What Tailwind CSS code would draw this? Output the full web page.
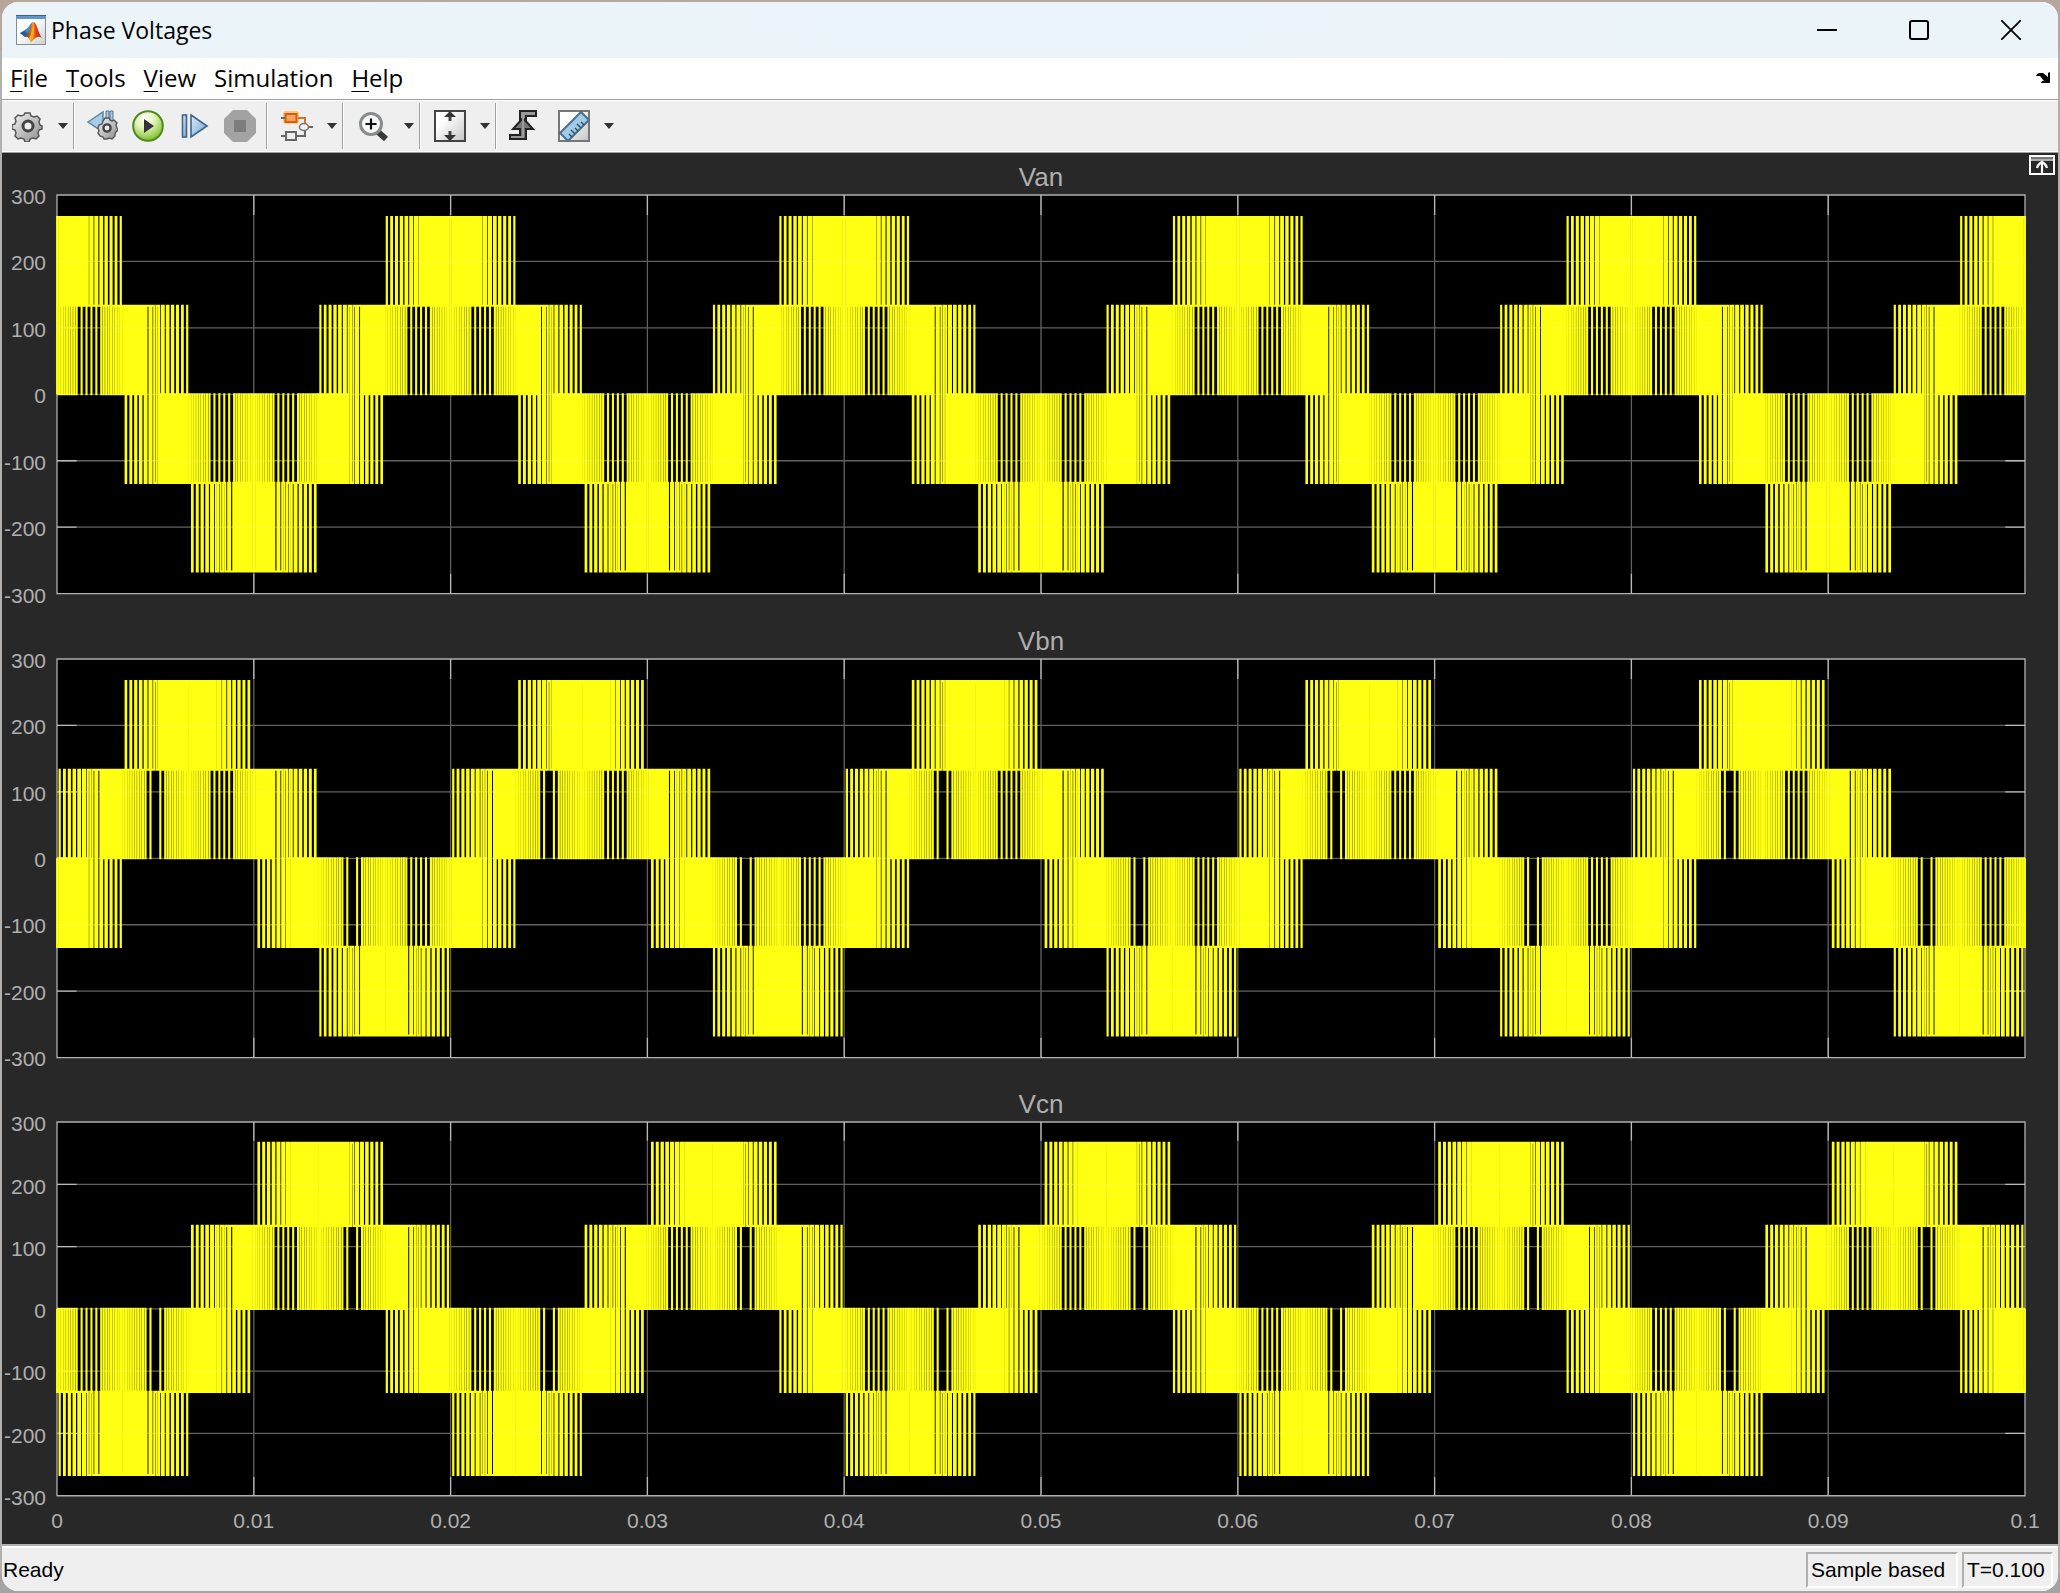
<!DOCTYPE html>
<html lang="en">
<head>
    <meta charset="UTF-8">
    <meta name="viewport" content="width=device-width, initial-scale=1.0">
    <title>Phase Voltages</title>
    <script src="https://cdn.jsdelivr.net/npm/@tailwindcss/browser@4"></script>
</head>
<body class="h-screen p-[2px] bg-[#b2b0af] bg-[linear-gradient(#b8a59b_50px,#b2b0af_51px,#b2b0af_calc(100%-20px),#a3a3a3_calc(100%-19px))] font-['Liberation_Sans',sans-serif] text-black">
    <div class="h-full flex flex-col rounded-2xl overflow-hidden bg-[#efefef]">
        <header class="h-14 shrink-0 flex items-center bg-linear-to-r from-[#ebf5f8] via-[#ecf4fb] to-[#ebf4f8] pl-[14px] font-['Open_Sans',sans-serif]">
            <svg class="w-[30px] h-[30px] mr-[5px]" viewBox="0 0 30 30">
                <defs>
                    <linearGradient id="mlPaper" x1="0" y1="0" x2="1" y2="1"><stop offset="0.4" stop-color="#fff"/><stop offset="1" stop-color="#cfcfcf"/></linearGradient>
                    <linearGradient id="mlPeak" x1="0" x2="1"><stop offset="0" stop-color="#7a1f10"/><stop offset="0.45" stop-color="#f08a1c"/><stop offset="0.6" stop-color="#e2501a"/><stop offset="1" stop-color="#9c1f12"/></linearGradient>
                </defs>
                <rect x="0.5" y="0.5" width="29" height="29" fill="url(#mlPaper)" stroke="#858b92"/>
                <rect x="0" y="0" width="30" height="4" fill="#5f96cb"/>
                <path d="M0 .5h30" stroke="#3c5f8c"/>
                <path d="M4 18L10 14C13 13 14 8 17 7L13 20L9 22Z" fill="#3f8fcb"/>
                <path d="M4 18L9 22L12 19L9 16Z" fill="#2a5f95"/>
                <path d="M9 22C13 20 14 9 18 7C21 8 22 18 26 23C22 20 19 23 15 27C13 23 12 21 9 22Z" fill="url(#mlPeak)"/>
                <path d="M13 23C16 19 16 11 18 7C18 15 19 20 15 27Z" fill="#f7a823"/>
            </svg>
            <h1 class="text-[23px] leading-8">Phase Voltages</h1>
            <div class="ml-auto flex mr-[2px]">
                <button aria-label="Minimize" class="w-[92px] h-14 grid place-items-center">
                    <svg class="w-5 h-5" viewBox="0 0 20 20"><path d="M0 10h20" stroke="#000" stroke-width="2"/></svg>
                </button>
                <button aria-label="Maximize" class="w-[92px] h-14 grid place-items-center">
                    <svg class="w-5 h-5" viewBox="0 0 20 20"><rect x="1" y="1" width="18" height="18" rx="2" fill="none" stroke="#000" stroke-width="2"/></svg>
                </button>
                <button aria-label="Close" class="w-[91px] h-14 grid place-items-center">
                    <svg class="w-5 h-5" viewBox="0 0 20 20"><path d="M0 0L20 20M20 0L0 20" stroke="#000" stroke-width="1.8"/></svg>
                </button>
            </div>
        </header>

        <nav class="h-[41px] shrink-0 flex items-center gap-[18px] bg-white pl-[8px] pr-[7px] pb-[2px] font-['Open_Sans',sans-serif] text-[24px] leading-8">
            <button><span class="underline underline-offset-4 decoration-1">F</span>ile</button>
            <button><span class="underline underline-offset-4 decoration-1">T</span>ools</button>
            <button><span class="underline underline-offset-4 decoration-1">V</span>iew</button>
            <button>S<span class="underline underline-offset-4 decoration-1">i</span>mulation</button>
            <button><span class="underline underline-offset-4 decoration-1">H</span>elp</button>
            <button aria-label="Dock" class="ml-auto">
                <svg class="w-[15px] h-[12px]" viewBox="0 0 15 12"><path d="M0 4Q1 1 4 1H7L12 5V1L14 0V11H5L6 9H8L4 4Z" fill="#000"/></svg>
            </button>
        </nav>

        <div class="h-[54px] shrink-0 flex items-center bg-[#efefef] border-t border-b border-[#a0a0a0] shadow-[inset_0_1px_#fff,inset_0_-1px_#fff]">
            <div class="h-[46px] flex items-center pl-[10px] gap-[9px] border-r border-[#a0a0a0] shadow-[1px_0_#fff]">
                <button aria-label="Configuration properties" class="w-8 h-8">
                    <svg viewBox="0 0 32 32">
                        <defs><linearGradient id="steel" x1="0" y1="0" x2="1" y2="1"><stop offset="0" stop-color="#f4f4f4"/><stop offset="1" stop-color="#8c8c8c"/></linearGradient></defs>
                        <path d="M13 3h5l1 3 3 1 3-1 3 3-1 3 1 3 2 1v3l-3 1-1 3 1 3-3 3-3-1-3 1-1 3h-4l-1-3-3-1-3 1-3-3 1-3-1-3-3-1v-4l3-1 1-3-1-3 3-3 3 1 3-1z" fill="url(#steel)" stroke="#555" stroke-width="1.5"/>
                        <circle cx="16" cy="16" r="5" fill="#efefef" stroke="#444" stroke-width="3"/>
                    </svg>
                </button>
                <button aria-label="Configuration menu" class="w-5 h-8 grid place-items-center"><svg class="w-[10px] h-[6px]" viewBox="0 0 10 6"><path d="M0 0h10L5 6z" fill="#333"/></svg></button>
            </div>
            <div class="h-[46px] flex items-center pl-[12px] pr-[10px] gap-[14px] border-r border-[#a0a0a0] shadow-[1px_0_#fff]">
                <button aria-label="Step back" class="w-8 h-8">
                    <svg viewBox="0 0 32 32">
                        <path d="M2 12L17 2V22Z" fill="#a9cbe6" stroke="#5c84a8" stroke-width="1.5"/>
                        <path d="M20 1h3v13h-3zM24 1h3v13h-3z" fill="#a9cbe6" stroke="#4f7696"/>
                        <path d="M19 8h4l1 2 2 1 2-1 3 3-1 2 1 3 1 2-2 2-1 2 0 2-3 3-3-1-2 1-3 0-1-2-3-1-2-3 1-2-1-3 1-3 3-1 1-3z" fill="url(#steel)" stroke="#555" stroke-width="1.4"/>
                        <circle cx="21" cy="18" r="3.6" fill="#efefef" stroke="#444" stroke-width="2.4"/>
                    </svg>
                </button>
                <button aria-label="Run" class="w-8 h-8">
                    <svg viewBox="0 0 32 32">
                        <defs><radialGradient id="runBall" cx="0.4" cy="0.25" r="0.75"><stop offset="0" stop-color="#fff"/><stop offset="0.45" stop-color="#dff3b4"/><stop offset="1" stop-color="#7fc02c"/></radialGradient></defs>
                        <circle cx="16" cy="16" r="14.8" fill="url(#runBall)" stroke="#4f8a1f" stroke-width="2"/>
                        <path d="M12 9L22 16L12 23Z" fill="#333"/>
                    </svg>
                </button>
                <button aria-label="Step forward" class="w-8 h-8">
                    <svg viewBox="0 0 32 32">
                        <defs><linearGradient id="sky" x1="0" y1="0" x2="1" y2="1"><stop offset="0" stop-color="#dcebf7"/><stop offset="1" stop-color="#6fa5d2"/></linearGradient></defs>
                        <rect x="4.500" y="5" width="4" height="22" fill="url(#sky)" stroke="#3f6689" stroke-width="1.6"/>
                        <path d="M13 5L29 16L13 27Z" fill="url(#sky)" stroke="#3f6689" stroke-width="1.6"/>
                    </svg>
                </button>
                <button aria-label="Stop" class="w-8 h-8">
                    <svg viewBox="0 0 32 32">
                        <path d="M9 0H23L32 9V23L23 32H9L0 23V9Z" fill="#a3a3a3"/>
                        <rect x="10" y="10" width="12" height="12" fill="#7e7e7e"/>
                    </svg>
                </button>
            </div>
            <div class="h-[46px] flex items-center pl-[14px] gap-[9px] border-r border-[#a0a0a0] shadow-[1px_0_#fff]">
                <button aria-label="Highlight signal" class="w-8 h-8">
                    <svg viewBox="0 0 32 32">
                        <rect x="2" y="1" width="16" height="13" rx="3" fill="#ffc574"/>
                        <path d="M17 8h7v6" fill="none" stroke="#d9702a" stroke-width="2"/>
                        <path d="M0 8h4" stroke="#666" stroke-width="2"/>
                        <rect x="4.500" y="4" width="11" height="8" fill="#f8a35a" stroke="#cc5f1c" stroke-width="2"/>
                        <path d="M0 26h4M15 26h9v-6M28 17h4" fill="none" stroke="#666" stroke-width="2"/>
                        <rect x="5" y="22" width="10" height="8" fill="#eee" stroke="#666" stroke-width="2"/>
                        <ellipse cx="23" cy="17" rx="4.500" ry="3.500" fill="#f4f4f4" stroke="#777" stroke-width="1.6"/>
                    </svg>
                </button>
                <button aria-label="Signal menu" class="w-5 h-8 grid place-items-center"><svg class="w-[10px] h-[6px]" viewBox="0 0 10 6"><path d="M0 0h10L5 6z" fill="#333"/></svg></button>
            </div>
            <div class="h-[46px] flex items-center pl-[14px] gap-[10px] border-r border-[#a0a0a0] shadow-[1px_0_#fff]">
                <button aria-label="Zoom in" class="w-8 h-8">
                    <svg viewBox="0 0 32 32">
                        <path d="M20 21L29 29" stroke="#3a3a3a" stroke-width="6"/>
                        <circle cx="14" cy="14" r="10.500" fill="#f6f9fa" stroke="#8a8a8a" stroke-width="3"/>
                        <path d="M14 8.500v11M8.500 14h11" stroke="#111" stroke-width="2.200"/>
                    </svg>
                </button>
                <button aria-label="Zoom menu" class="w-5 h-8 grid place-items-center"><svg class="w-[10px] h-[6px]" viewBox="0 0 10 6"><path d="M0 0h10L5 6z" fill="#333"/></svg></button>
            </div>
            <div class="h-[46px] flex items-center pl-[14px] gap-[9px] border-r border-[#a0a0a0] shadow-[1px_0_#fff]">
                <button aria-label="Scale axes" class="w-8 h-8">
                    <svg viewBox="0 0 32 32">
                        <defs><linearGradient id="sheet" x1="0" y1="0" x2="1" y2="1"><stop offset="0.3" stop-color="#fff"/><stop offset="1" stop-color="#c4c4c4"/></linearGradient></defs>
                        <rect x="1" y="1" width="30" height="30" fill="url(#sheet)" stroke="#444" stroke-width="2"/>
                        <path d="M16 6v5M16 21v5" stroke="#444" stroke-width="3"/>
                        <path d="M16 1L22 7H10ZM16 31L22 25H10Z" fill="#333"/>
                    </svg>
                </button>
                <button aria-label="Scale menu" class="w-5 h-8 grid place-items-center"><svg class="w-[10px] h-[6px]" viewBox="0 0 10 6"><path d="M0 0h10L5 6z" fill="#333"/></svg></button>
            </div>
            <div class="h-[46px] flex items-center pl-[12px]">
                <button aria-label="Triggers" class="w-8 h-8">
                    <svg viewBox="0 0 32 32">
                        <path d="M2 25H12V1H28V6H18V29H2Z" fill="#999" stroke="#222" stroke-width="2"/>
                        <path d="M5 19L15 8L25 19H18V29H12V19Z" fill="#777" stroke="#222" stroke-width="2"/>
                        <path d="M3 27H15V4H27" fill="none" stroke="#999" stroke-width="2"/>
                    </svg>
                </button>
                <button aria-label="Cursor measurements" class="w-8 h-8 ml-[18px]">
                    <svg viewBox="0 0 32 32">
                        <rect x="1" y="1" width="30" height="30" fill="url(#sheet)" stroke="#777" stroke-width="2"/>
                        <path d="M2 23L23 2L31 10L10 31Z" fill="#9fcbe6" stroke="#4d6f88" stroke-width="2"/>
                        <path d="M14 27L11 24M17 24L13 20M20 21L17 18M23 18L19 14M26 15L23 12" stroke="#2f4f66" stroke-width="1.500"/>
                    </svg>
                </button>
                <button aria-label="Measurements menu" class="w-5 h-8 ml-[9px] grid place-items-center"><svg class="w-[10px] h-[6px]" viewBox="0 0 10 6"><path d="M0 0h10L5 6z" fill="#333"/></svg></button>
            </div>
        </div>

        <main class="relative flex-1 min-h-0 grid grid-rows-[42px_16fr_65px_16fr_65px_15fr_48px] bg-[#282828] pl-[55px] pr-[33px] text-[#afafaf]">
            <h2 class="self-end text-center text-[26px] leading-9">Van</h2>
            <section class="plot relative bg-black" data-phase="0" aria-label="Van"></section>
            <h2 class="self-end text-center text-[26px] leading-9">Vbn</h2>
            <section class="plot relative bg-black" data-phase="1" aria-label="Vbn"></section>
            <h2 class="self-end text-center text-[26px] leading-9">Vcn</h2>
            <section class="plot relative bg-black" data-phase="2" aria-label="Vcn"></section>
            <div id="timeAxis" class="flex justify-between pt-[9px] text-[21px] leading-8"></div>

            <button aria-label="Maximize axes" class="absolute top-[2px] right-[3px] w-[26px] h-[20px]">
                <svg viewBox="0 0 26 20">
                    <rect x="1" y="1" width="24" height="18" fill="#282828" stroke="#fff" stroke-width="2"/>
                    <path d="M2 3h22" stroke="#777" stroke-width="2"/><path d="M2 5h22" stroke="#ddd" stroke-width="1.500"/>
                    <path d="M13 18V8M8 13Q9 9 13 7Q17 9 18 13" fill="none" stroke="#fff" stroke-width="2.200"/>
                </svg>
            </button>
        </main>

        <footer class="h-[47px] shrink-0 flex items-start justify-end gap-1 border-t-2 border-[#b0b0b0] shadow-[inset_0_2px_#fff] bg-[#efefef] pt-[6px] pr-[5px] text-[21px] leading-8">
            <span class="mr-auto pl-[1px] pt-[2px]">Ready</span>
            <span class="w-[152px] h-9 pl-[3px] border-2 border-t-[#b0b0b0] border-l-[#b0b0b0] border-r-white border-b-white">Sample based</span>
            <span class="w-[91px] h-9 pl-[3px] border-2 border-t-[#b0b0b0] border-l-[#b0b0b0] border-r-white border-b-white">T=0.100</span>
        </footer>
    </div>

    <script>
        const VDC = 400;
        const F0 = 50;
        const TC = 1 / 4000;   // carrier period
        const T_END = 0.1;

        // zero vectors shorter than the minimum pulse are lost close to the middle of a sector
        const DROP_000 = Math.cos(Math.PI / 180);
        const DROP_111 = Math.cos(10.5 * Math.PI / 180);
        const MIN_PULSE = 0.025;

        function refs(t) {
            return [0, 1, 2].map(p => Math.cos(2 * Math.PI * F0 * t - p * 2 * Math.PI / 3));
        }

        function span(v) {
            return (Math.max(...v) - Math.min(...v)) / Math.sqrt(3);
        }

        // duties of the three legs for one half of a carrier period
        function halfPeriod(mid, zeroAt, oneAt) {
            const v = refs(mid);
            const hi = Math.max(...v), lo = Math.min(...v);
            const duty = v.map(x => 0.5 + (x - (hi + lo) / 2) / Math.sqrt(3));
            const iHi = v.indexOf(hi), iLo = v.indexOf(lo), iMid = 3 - iHi - iLo;
            if (duty[iHi] - duty[iMid] < MIN_PULSE) duty[iMid] = duty[iHi];
            if (duty[iMid] - duty[iLo] < MIN_PULSE) duty[iMid] = duty[iLo];
            if (span(refs(zeroAt)) > DROP_000) duty[iHi] = 1.01;
            if (span(refs(oneAt)) > DROP_111) duty[iLo] = -0.01;
            return duty;
        }

        function switching() {
            const out = [];
            for (let k = 0; k < T_END / TC; k++) {
                const t = k * TC;
                const up = halfPeriod(t + TC / 4, t, t + TC / 2);
                const down = halfPeriod(t + TC * 3 / 4, t + TC, t + TC / 2);
                up.forEach((d, p) => out.push([t + (1 - d) * TC / 2, p, 1, d]));
                down.forEach((d, p) => out.push([t + TC / 2 + d * TC / 2, p, 0, d]));
            }
            return out.sort((a, b) => a[0] - b[0]);
        }

        function tracePath(phase, events) {
            const s = [0, 0, 0];
            const volt = () => VDC * (s[phase] - (s[0] + s[1] + s[2]) / 3);
            const y = v => (300 - v).toFixed(1);
            let d = `M0 ${y(0)}`;
            for (let i = 0; i < events.length; i++) {
                const [t, p, on, duty] = events[i];
                if (duty < 0) continue;              // leg stays off
                s[p] = duty > 1 ? 1 : on;            // leg stays on
                const next = events[i + 1];
                if (next && next[0] - t < 1e-9) continue;
                d += `H${(t / T_END * 1000).toFixed(3)}V${y(volt())}`;
            }
            return d + 'H1000';
        }

        const events = switching();
        const yTicks = [300, 200, 100, 0, -100, -200, -300];
        const xTicks = ['0', '0.01', '0.02', '0.03', '0.04', '0.05', '0.06', '0.07', '0.08', '0.09', '0.1'];

        document.querySelectorAll('.plot').forEach(el => {
            let grid = '', ticks = '';
            for (let i = 1; i < 10; i++) {
                grid += `M${i * 100} 0V600`;
                ticks += `M${i * 100} 0V30M${i * 100} 570V600`;
            }
            for (let i = 1; i < 6; i++) {
                grid += `M0 ${i * 100}H1000`;
                ticks += `M0 ${i * 100}H10M990 ${i * 100}H1000`;
            }
            el.innerHTML = `
                <svg class="absolute inset-0 w-full h-full overflow-visible" viewBox="0 0 1000 600" preserveAspectRatio="none" fill="none">
                    <path d="${grid}" stroke="#4a4a4a" stroke-width="1.3" vector-effect="non-scaling-stroke"/>
                    <path d="${ticks}M0 0H1000V600H0Z" stroke="#afafaf" stroke-width="1.3" vector-effect="non-scaling-stroke"/>
                    <path d="${tracePath(+el.dataset.phase, events)}" stroke="#ffff11" stroke-width="2.1" vector-effect="non-scaling-stroke"/>
                    <path d="${grid}" stroke="#ffffff" stroke-opacity="0.12" stroke-width="1.3" vector-effect="non-scaling-stroke"/>
                </svg>
                <div class="absolute inset-y-0 right-full mr-[11px] flex flex-col justify-between text-right text-[21px] leading-1">
                    ${yTicks.map(v => `<span class="h-0">${v}</span>`).join('')}
                </div>`;
        });

        document.getElementById('timeAxis').innerHTML =
            xTicks.map(v => `<span class="w-0 flex justify-center">${v}</span>`).join('');
    </script>
</body>
</html>
